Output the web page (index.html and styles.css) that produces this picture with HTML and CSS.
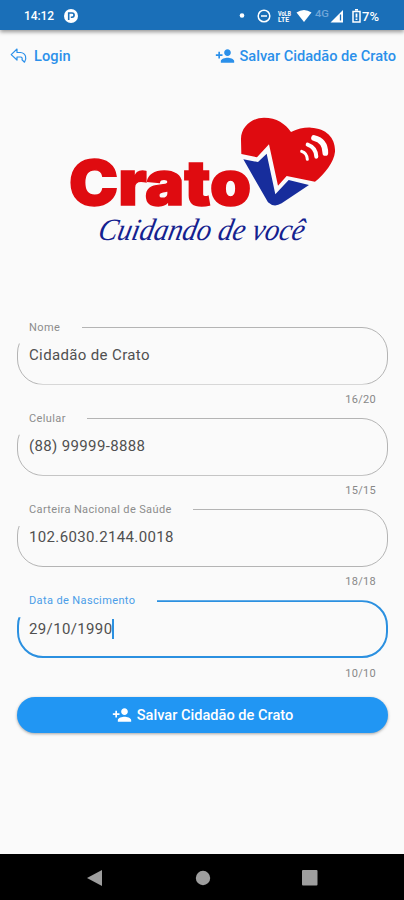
FILE: index.html
```html
<!DOCTYPE html>
<html lang="pt-BR">
<head>
<meta charset="utf-8">
<title>Cidadão de Crato</title>
<link rel="stylesheet" href="styles.css">
</head>
<body>
<svg width="0" height="0" class="defs">
  <symbol id="person-add" viewBox="0 0 24 24"><path d="M15 12c2.21 0 4-1.79 4-4s-1.79-4-4-4-4 1.790-4 4 1.790 4 4 4zm-9-2V7H4v3H1v2h3v3h2v-3h3v-2H6zm9 4c-2.670 0-8 1.340-8 4v2h16v-2c0-2.660-5.330-4-8-4z" fill="currentColor"/></symbol>
</svg>
<header class="status">
  <span class="time">14:12</span>
  <svg class="app-dot" width="14" height="14" viewBox="0 0 14 14"><circle cx="7" cy="7" r="7" fill="#fff"/><path d="M4.700 11V4H8a2.100 2.100 0 0 1 0 4.200H6.800" fill="none" stroke="#1a6fb8" stroke-width="1.600"/></svg>
  <svg class="signals" width="106" height="20" viewBox="0 0 106 20">
    <circle cx="3" cy="9.500" r="2.300" fill="#fff"/>
    <circle cx="25" cy="10" r="5.800" fill="none" stroke="#fff" stroke-width="1.500"/>
    <path d="M22 10h6" stroke="#fff" stroke-width="1.500"/>
    <text class="volte" x="39" y="9.500" textLength="13" lengthAdjust="spacingAndGlyphs">VoLB</text>
    <text class="volte" x="39" y="16" textLength="11" lengthAdjust="spacingAndGlyphs">LTE</text>
    <path d="M57.500 6.500q7.500-5 15 0L65 16z" fill="#fff"/>
    <text class="network" x="76" y="11" textLength="14" lengthAdjust="spacingAndGlyphs">4G</text>
    <path d="M91.500 16.500L104 4v12.500z" fill="#fff"/>
    <path d="M101.500 8.500v6" stroke="#1a6fb8" stroke-width="1.300"/>
  </svg>
  <svg class="battery" width="9" height="14" viewBox="0 0 9 14"><path d="M3 .8h3M1 2.500h7v10.500H1z" fill="none" stroke="#fff" stroke-width="1.500"/><path d="M4.500 4.500v4M4.500 9.500v1.500" stroke="#fff" stroke-width="1.800"/></svg>
  <span class="percent">7%</span>
</header>
<nav class="toolbar">
  <a class="action"><svg class="reply" width="18" height="16" viewBox="0 0 18 16"><path d="M7 1L1.200 6.600 7 12V9h3.500c1.500 0 2 1 1.500 2.800l2.500 2.400c2.500-4 1.500-9-4-9.700H7z" fill="none" stroke="currentColor" stroke-width="1.200" stroke-linejoin="round"/></svg><span class="login">Login</span></a>
  <a class="action"><svg class="person" width="20" height="20"><use href="#person-add"/></svg><span class="save">Salvar Cidadão de Crato</span></a>
</nav>
<main>
  <svg class="logo" width="280" height="140" viewBox="60 110 280 140">
    <text class="brand" x="69" y="205" textLength="182" lengthAdjust="spacingAndGlyphs">Crato</text>
    <g transform="translate(200 105) scale(.33333)">
      <path fill="#df0b10" d="M124 147L123 104C122 64 158 38 192 38C230 38 256 56 273 81C294 71 314 67 333 68C380 70 407 100 405 140C402 171 374 207 345 230L260 213L234 242L207 118L171 157Z"/>
      <path fill="#172d9c" d="M130 163L174 171L200 146L226 268L266 225L327 240L245 295Q222 309 204 292Z"/>
      <g fill="none" stroke="#fff" stroke-linecap="round"><path d="M342 99Q376 107 376 144" stroke-width="17"/><path d="M323 119Q348 128 349 155" stroke-width="12"/><path d="M305 139Q321 144 322 163" stroke-width="9"/></g>
    </g>
    <text class="slogan" x="0" y="0" transform="translate(97 240) skewX(-12)" textLength="206" lengthAdjust="spacingAndGlyphs">Cuidando de você</text>
  </svg>
  <form class="form">
    <div class="field nome"><label>Nome</label><span class="value">Cidadão de Crato</span><span class="count">16/20</span></div>
    <div class="field celular"><label>Celular</label><span class="value">(88) 99999-8888</span><span class="count">15/15</span></div>
    <div class="field carteira"><label>Carteira Nacional de Saúde</label><span class="value">102.6030.2144.0018</span><span class="count">18/18</span></div>
    <div class="field data focused"><label>Data de Nascimento</label><span class="value">29/10/1990</span><span class="count">10/10</span></div>
    <button type="button" class="submit"><svg class="person" width="20" height="20"><use href="#person-add"/></svg><span>Salvar Cidadão de Crato</span></button>
  </form>
</main>
<footer class="navbar">
  <svg width="16" height="18" viewBox="0 0 16 18"><path d="M0 9L15 1v16z" fill="#9e9e9e"/></svg>
  <svg width="16" height="16" viewBox="0 0 16 16"><circle cx="8" cy="8" r="7.200" fill="#9e9e9e"/></svg>
  <svg width="16" height="16" viewBox="0 0 16 16"><rect width="15.500" height="15.500" rx="1" fill="#9e9e9e"/></svg>
</footer>
</body>
</html>
```
FILE: styles.css
```css
*, *::before { box-sizing: border-box; }
body {
  margin: 0;
  width: 404px;
  height: 900px;
  display: flex;
  flex-direction: column;
  overflow: hidden;
  background: #fafafa;
  color: #505050;
  font-family: Roboto, sans-serif;
}
svg { display: block; flex: none; }
.defs { position: absolute; }
.status {
  height: 30px;
  flex: none;
  display: flex;
  align-items: center;
  padding: 2px 23px 0 24px;
  background: #1a6fb8;
  color: #fff;
  box-shadow: 0 2px 4px rgba(0, 0, 0, .4);
  font-size: 12px;
  font-weight: 500;
}
.time { width: 40px; letter-spacing: -.1px; }
.signals { margin-left: auto; }
.battery { margin-left: 7px; }
.percent { margin-left: 1px; width: 19px; font-size: 13px; }
.volte { font-size: 6.5px; font-weight: 700; fill: #fff; }
.network { font-size: 9px; fill: #6fa6d8; }
.toolbar {
  height: 51px;
  flex: none;
  display: flex;
  justify-content: space-between;
  align-items: center;
  padding: 0 8px 0 10px;
  color: #2b90ea;
  font-size: 14.6px;
  font-weight: 500;
}
.action { display: flex; align-items: center; gap: 6px; }
.action + .action { gap: 5px; }
.login { letter-spacing: .1px; }
main { flex: 1; }
.logo { margin: 29px 0 0 60px; }
.brand {
  font-family: Inter, sans-serif;
  font-size: 62px;
  font-weight: 900;
  fill: #df0b10;
  stroke: #df0b10;
  stroke-width: 1.5px;
}
.slogan {
  font-family: "Liberation Serif", serif;
  font-style: italic;
  font-size: 31px;
  fill: #14218f;
}
.form { padding: 76.6px 16px 0 17px; }
.field {
  position: relative;
  height: 91.2px;
  padding-left: 12px;
}
.field::before {
  content: "";
  position: absolute;
  inset: 0 0 auto;
  height: 58px;
  border: 1px solid #b4b4b4;
  border-radius: 26px;
  clip-path: polygon(var(--gap) 0, 100% 0, 100% 100%, 0 100%, 0 17px, var(--gap) 17px);
}
.nome { --gap: 65px; }
.celular { --gap: 70px; }
.carteira { --gap: 176px; }
.data { --gap: 140px; }
.focused::before { border: 2px solid #2b90e0; }
label {
  display: block;
  height: 14px;
  margin-bottom: 10.4px;
  line-height: 14px;
  font-size: 11px;
  letter-spacing: .38px;
  color: #8c8c8c;
  transform: translateY(-6px);
}
.focused label { color: #4a9de8; }
.value {
  display: block;
  width: max-content;
  height: 20px;
  margin-top: -6px;
  line-height: 20px;
  font-size: 15px;
  letter-spacing: .36px;
}
.focused .value { border-right: 2px solid #2b90e0; }
.count {
  position: absolute;
  right: 12px;
  top: 66.4px;
  line-height: 14px;
  font-size: 11px;
  letter-spacing: .3px;
  color: #888;
}
.submit {
  width: 371px;
  height: 36px;
  margin-top: 5.4px;
  padding: 0;
  border: 0;
  border-radius: 18px;
  display: flex;
  align-items: center;
  justify-content: center;
  gap: 5px;
  background: #2196f3;
  color: #fff;
  box-shadow: 0 1px 3px rgba(0, 0, 0, .35);
  font: 500 14.6px Roboto, sans-serif;
}
.navbar {
  height: 46px;
  flex: none;
  display: flex;
  align-items: center;
  justify-content: space-between;
  padding: 1px 86px 0 87px;
  background: #000;
}
```
